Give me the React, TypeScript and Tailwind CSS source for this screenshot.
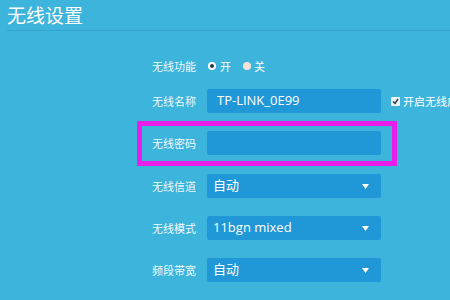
import React from 'react';

const cjk = { fontFamily: '"Noto Sans CJK SC", "Noto Sans", sans-serif' };
const latin = { fontFamily: '"Open Sans", "Noto Sans CJK SC", sans-serif' };

const Label = ({ text }: { text: string }) => (
  <span className="w-[55px] shrink-0 text-[11px] text-white/95" style={cjk}>
    {text}
  </span>
);

const Select = ({ value }: { value: string }) => (
  <div className="flex h-[24px] w-[174px] shrink-0 items-center justify-between rounded-[2px] bg-[#2097d6] pl-[6px] pr-[12px]">
    <span className="text-[13px] text-white" style={latin}>
      {value}
    </span>
    <svg width="7" height="5" viewBox="0 0 7 5">
      <path d="M0 0 L7 0 L3.5 5 Z" fill="#ffffff" />
    </svg>
  </div>
);

export default function App() {
  return (
    <div className="h-[300px] w-[450px] overflow-hidden bg-[#3db4dc]">
      <div className="ml-[7px] h-[31px] border-b border-[#35a3cb]">
        <h1 className="text-[19px] leading-[30px] text-white" style={cjk}>
          无线设置
        </h1>
      </div>

      <div className="ml-[152px] mt-[23px] flex flex-col">
        <div className="flex h-[24px] items-center">
          <Label text="无线功能" />
          <span className="ml-[1px] flex h-[8px] w-[8px] items-center justify-center rounded-full bg-white">
            <span className="h-[4px] w-[4px] rounded-full bg-[#233a4a]" />
          </span>
          <span className="ml-[4px] text-[11px] text-white" style={cjk}>开</span>
          <span className="ml-[12px] h-[8px] w-[8px] rounded-full bg-[#f3e2d8]" />
          <span className="ml-[3px] text-[11px] text-white" style={cjk}>关</span>
        </div>

        <div className="mt-[11px] flex h-[24px] items-center whitespace-nowrap">
          <Label text="无线名称" />
          <div className="flex h-[24px] w-[174px] shrink-0 items-center rounded-[2px] bg-[#2097d6] pl-[10px]">
            <span className="text-[13px] text-white" style={latin}>TP-LINK_0E99</span>
          </div>
          <span className="ml-[10px] flex h-[9px] w-[9px] shrink-0 items-center justify-center rounded-[1px] bg-[#eef2f5]">
            <svg width="7" height="7" viewBox="0 0 7 7">
              <path d="M1 3.5 L3 5.5 L6 1" stroke="#2a3440" strokeWidth="1.4" fill="none" />
            </svg>
          </span>
          <span className="ml-[3px] shrink-0 text-[11px] text-white" style={cjk}>开启无线广播</span>
        </div>

        <div className="relative mt-[18px] flex h-[24px] items-center">
          <div className="absolute left-[-15px] top-[-10px] h-[45px] w-[260px] border-[5px] border-[#ea1ee9]" />
          <Label text="无线密码" />
          <div className="h-[24px] w-[174px] shrink-0 rounded-[2px] bg-[#2097d6]" />
        </div>

        <div className="mt-[19px] flex h-[24px] items-center">
          <Label text="无线信道" />
          <Select value="自动" />
        </div>

        <div className="mt-[18px] flex h-[24px] items-center">
          <Label text="无线模式" />
          <Select value="11bgn mixed" />
        </div>

        <div className="mt-[18px] flex h-[24px] items-center">
          <Label text="频段带宽" />
          <Select value="自动" />
        </div>
      </div>
    </div>
  );
}
